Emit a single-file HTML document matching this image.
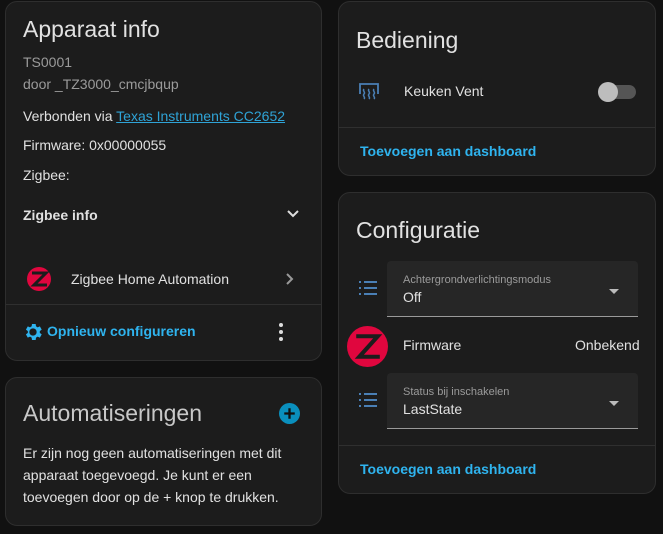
<!DOCTYPE html>
<html><head><meta charset="utf-8"><style>
*{box-sizing:border-box;margin:0;padding:0}
body{width:663px;height:534px;background:#111111;font-family:"Liberation Sans",sans-serif;color:#e1e1e1;position:relative;overflow:hidden}
.card{position:absolute;background:#1c1c1c;border:1px solid #2e2e2e;border-radius:12px}
.a{position:absolute;white-space:nowrap}
.t{font-size:23px;color:#e1e1e1}
.s{font-size:14px}
.g{color:#9b9b9b}
.l{color:#2fb4ef;font-weight:bold;font-size:14px}
.hr{position:absolute;left:0;right:0;height:1px;background:#2f2f2f}
.sel{position:absolute;background:#262626;border-radius:4px 4px 0 0;border-bottom:1px solid #9a9a9a}
.tri{position:absolute;width:0;height:0;border-left:5px solid transparent;border-right:5px solid transparent;border-top:5px solid #bbb}
</style></head><body>

<div class="card" style="left:5px;top:1px;width:317px;height:360px">
 <div class="a t" style="left:17px;top:14px">Apparaat info</div>
 <div class="a s g" style="left:17px;top:52px">TS0001</div>
 <div class="a s g" style="left:17px;top:74px">door _TZ3000_cmcjbqup</div>
 <div class="a s" style="left:17px;top:106px">Verbonden via <span style="color:#2fa3d6;text-decoration:underline">Texas Instruments CC2652</span></div>
 <div class="a s" style="left:17px;top:135px">Firmware: 0x00000055</div>
 <div class="a s" style="left:17px;top:165px">Zigbee:</div>
 <div class="a s" style="left:17px;top:205px;font-weight:bold">Zigbee info</div>
 <svg class="a" style="left:280px;top:207px" width="14" height="10" viewBox="0 0 14 10"><path d="M2 2l5 5 5-5" stroke="#ddd" stroke-width="2" fill="none"/></svg>
 <svg class="a" style="left:20px;top:264px" width="26" height="26" viewBox="0 0 26 26"><circle cx="13" cy="13" r="12" fill="#e0063e"/><path d="M6 7h14L8 19h13" stroke="#1c1c1c" stroke-width="3" fill="none"/></svg>
 <div class="a s" style="left:65px;top:269px">Zigbee Home Automation</div>
 <svg class="a" style="left:279px;top:270px" width="10" height="14" viewBox="0 0 10 14"><path d="M2 2l5 5-5 5" stroke="#999" stroke-width="2" fill="none"/></svg>
 <div class="hr" style="top:302px"></div>
 <svg class="a" style="left:16px;top:319px" width="22" height="22" viewBox="0 0 24 24"><path fill="#2fb4ef" d="M12 8a4 4 0 1 0 0 8 4 4 0 0 0 0-8zm7.4 5l2.1 1.6-2 3.5-2.5-1a7 7 0 0 1-1.7 1l-.4 2.6h-4l-.4-2.6a7 7 0 0 1-1.7-1l-2.5 1-2-3.5L6.4 13a7 7 0 0 1 0-2L4.3 9.4l2-3.5 2.5 1a7 7 0 0 1 1.7-1L10.9 3.300h4l.4 2.6a7 7 0 0 1 1.7 1l2.5-1 2 3.5L19.4 11a7 7 0 0 1 0 2z"/></svg>
 <div class="a l" style="left:41px;top:321px">Opnieuw configureren</div>
 <div class="a" style="left:273px;top:321px;width:4px">
  <div style="width:4px;height:4px;border-radius:2px;background:#ddd;margin-bottom:3px"></div>
  <div style="width:4px;height:4px;border-radius:2px;background:#ddd;margin-bottom:3px"></div>
  <div style="width:4px;height:4px;border-radius:2px;background:#ddd"></div></div>
</div>

<div class="card" style="left:5px;top:377px;width:317px;height:149px">
 <div class="a t" style="left:17px;top:22px;color:#c8c8c8">Automatiseringen</div>
 <svg class="a" style="left:273px;top:25px" width="21" height="21" viewBox="0 0 20 20"><circle cx="10" cy="10" r="10" fill="#0a8fbd"/><path d="M10 5v10M5 10h10" stroke="#111" stroke-width="2.2"/></svg>
 <div class="a s" style="left:17px;top:64px;line-height:22px;white-space:normal;width:290px">Er zijn nog geen automatiseringen met dit apparaat toegevoegd. Je kunt er een toevoegen door op de + knop te drukken.</div>
</div>

<div class="card" style="left:338px;top:1px;width:318px;height:175px">
 <div class="a t" style="left:17px;top:25px">Bediening</div>
 <svg class="a" style="left:19px;top:80px" width="22" height="20" viewBox="0 0 22 20"><path d="M2 12V2h18v10" stroke="#4a7fb5" stroke-width="1.8" fill="none"/><path d="M6 7c-2 2 2 3 0 5s2 3 0 5M11 7c-2 2 2 3 0 5s2 3 0 5M16 7c-2 2 2 3 0 5s2 3 0 5" stroke="#4a7fb5" stroke-width="1.5" fill="none"/></svg>
 <div class="a s" style="left:65px;top:81px">Keuken Vent</div>
 <div class="a" style="left:263px;top:83px;width:34px;height:14px;border-radius:7px;background:#555"></div>
 <div class="a" style="left:259px;top:80px;width:20px;height:20px;border-radius:10px;background:#bdbdbd"></div>
 <div class="hr" style="top:125px"></div>
 <div class="a l" style="left:21px;top:141px">Toevoegen aan dashboard</div>
</div>

<div class="card" style="left:338px;top:192px;width:318px;height:302px">
 <div class="a t" style="left:17px;top:24px">Configuratie</div>
 <svg class="a" style="left:19px;top:87px" width="20" height="16" viewBox="0 0 20 16"><path d="M1 2h2M1 8h2M1 14h2M6 2h13M6 8h13M6 14h13" stroke="#4a7fb5" stroke-width="2"/></svg>
 <div class="sel" style="left:48px;top:68px;width:251px;height:56px"></div>
 <div class="a" style="left:64px;top:81px;font-size:11px;color:#9b9b9b">Achtergrondverlichtingsmodus</div>
 <div class="a s" style="left:64px;top:96px">Off</div>
 <div class="tri" style="left:270px;top:96px"></div>
 <svg class="a" style="left:8px;top:133px" width="41" height="41" viewBox="0 0 40 40"><circle cx="20" cy="20" r="20" fill="#e0063e"/><path d="M9 10h21L12 30h20" stroke="#1c1c1c" stroke-width="4" fill="none"/></svg>
 <div class="a s" style="left:64px;top:144px">Firmware</div>
 <div class="a s" style="left:236px;top:144px">Onbekend</div>
 <svg class="a" style="left:19px;top:199px" width="20" height="16" viewBox="0 0 20 16"><path d="M1 2h2M1 8h2M1 14h2M6 2h13M6 8h13M6 14h13" stroke="#4a7fb5" stroke-width="2"/></svg>
 <div class="sel" style="left:48px;top:180px;width:251px;height:56px"></div>
 <div class="a" style="left:64px;top:193px;font-size:11px;color:#9b9b9b">Status bij inschakelen</div>
 <div class="a s" style="left:64px;top:208px">LastState</div>
 <div class="tri" style="left:270px;top:208px"></div>
 <div class="hr" style="top:252px"></div>
 <div class="a l" style="left:21px;top:268px">Toevoegen aan dashboard</div>
</div>
</body></html>
